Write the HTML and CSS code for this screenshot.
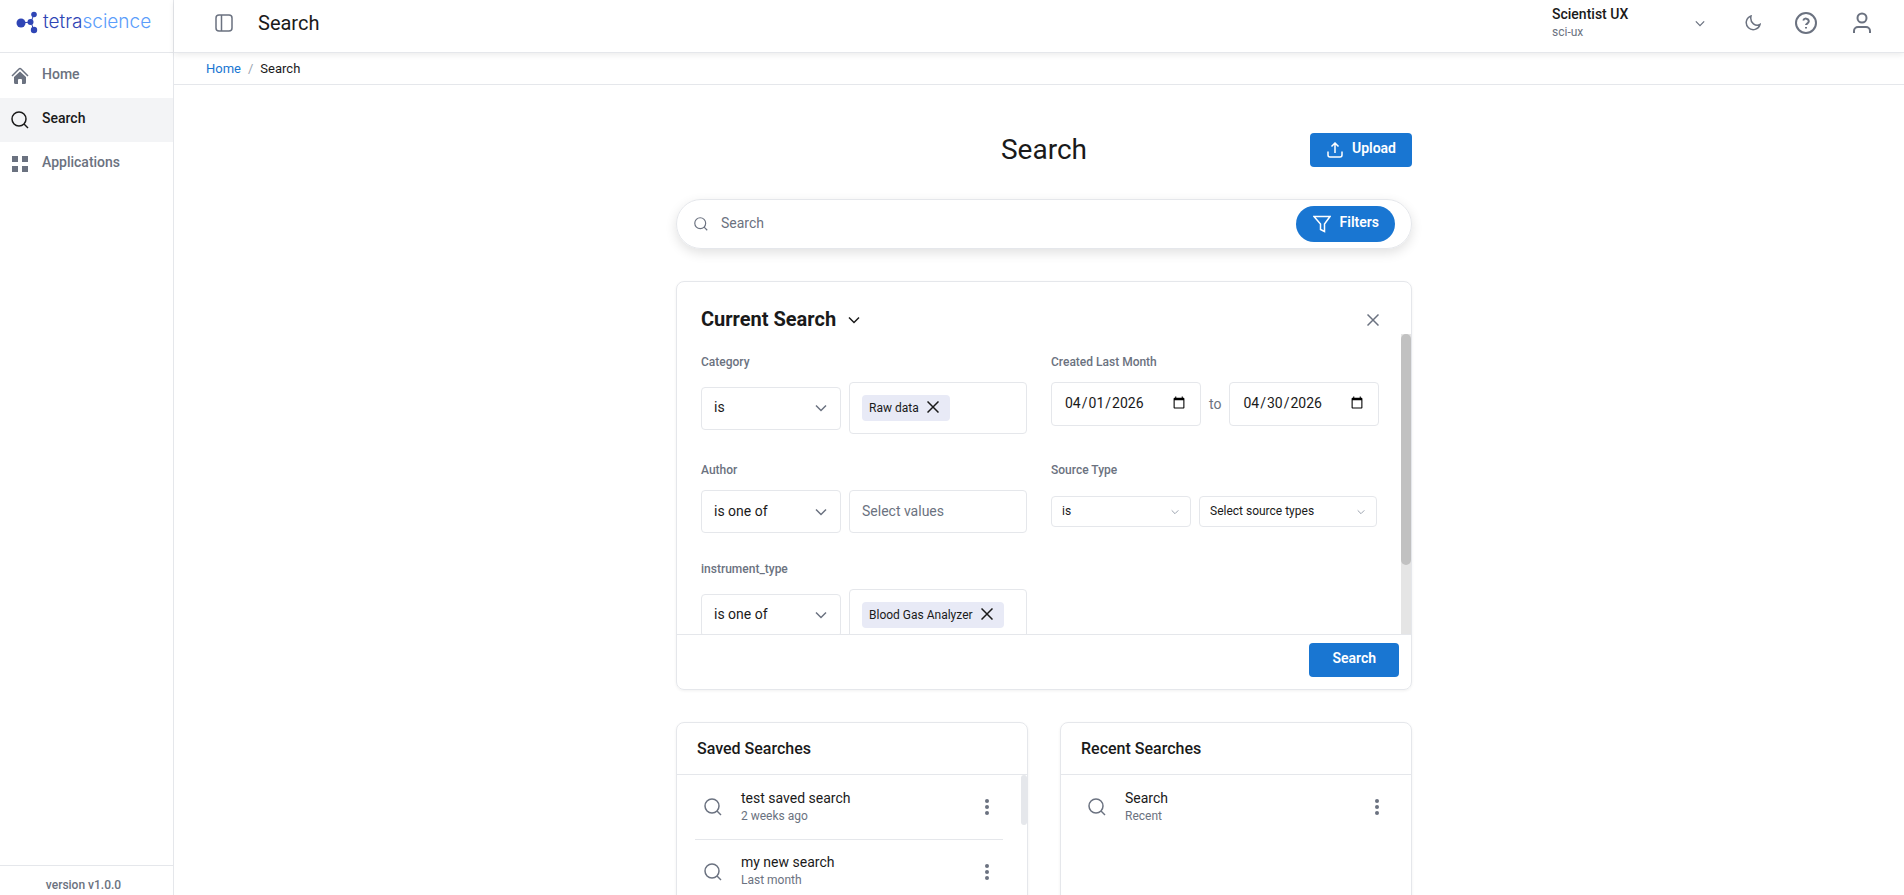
FILE: index.html
```
<!DOCTYPE html>
<html lang="en">
<head>
	<title>Search | TetraScience</title>
	<meta charset="utf-8">
	<meta name="viewport" content="width=device-width, initial-scale=1">
	<link rel="stylesheet" href="styles.css">
</head>

<body>

<!-- shared icons -->
<svg class="sprite" aria-hidden="true">
	<symbol id="i-search" viewBox="0 0 18 18"><circle cx="8" cy="8" r="7"/><path d="M13 13l4 4"/></symbol>
	<symbol id="i-chevron" viewBox="0 0 12 8"><path d="M1 1.5l5 5 5-5"/></symbol>
	<symbol id="i-close" viewBox="0 0 12 12"><path d="M.5.5l11 11M11.5.5l-11 11"/></symbol>
	<symbol id="i-dots" viewBox="0 0 4 16"><circle cx="2" cy="2" r="2"/><circle cx="2" cy="8" r="2"/><circle cx="2" cy="14" r="2"/></symbol>
</svg>

<div class="app">

	<aside class="sidebar">
		<a class="logo" href="#">
			<svg width="22" height="24" viewBox="0 0 22 24" aria-hidden="true">
				<path d="M5 13l10-1 3-8M15 12l3 9" fill="none" stroke="#2f45b5" stroke-width="1"/>
				<g fill="#2f45b5" stroke="none"><circle cx="5" cy="13" r="4.5"/><circle cx="14.5" cy="12" r="3"/><circle cx="18" cy="4.500" r="2.800"/><circle cx="18" cy="20" r="3.200"/></g>
			</svg>
			<span class="logo-text">tetra<span>science</span></span>
		</a>
		<nav class="nav">
			<a href="#">
				<svg width="18" height="18" viewBox="0 0 18 18"><path class="line" d="M1 9l7-7q1-1 2 0l7 7"/><path class="fill" d="M9 4.500l6 5.500v5.500q0 1.500-1.500 1.500H11v-4q0-1-1-1H8q-1 0-1 1v4H4.500Q3 17 3 15.500V10z"/></svg>
				<span>Home</span>
			</a>
			<a class="active" href="#">
				<svg width="18" height="18"><use href="#i-search"/></svg>
				<span>Search</span>
			</a>
			<a href="#">
				<svg width="18" height="18" viewBox="0 0 18 18"><path class="fill" d="M1 1h6v6H1zM11 1h6v6h-6zM1 11h6v6H1zM11 11h6v6h-6z"/></svg>
				<span>Applications</span>
			</a>
		</nav>
		<div class="version">version v1.0.0</div>
	</aside>

	<div class="page">

		<header class="topbar">
			<button class="icon-btn" title="Toggle sidebar">
				<svg width="18" height="18" viewBox="0 0 18 18"><rect x="1" y="1" width="16" height="16" rx="3"/><path d="M6.500 1v16"/></svg>
			</button>
			<div class="topbar-title">Search</div>
			<button class="org">
				<span class="org-name"><strong>Scientist UX</strong><small>sci-ux</small></span>
				<svg width="10" height="7"><use href="#i-chevron"/></svg>
			</button>
			<div class="tools">
				<button class="icon-btn" title="Dark mode">
					<svg width="16" height="16" viewBox="0 0 16 16"><path d="M6 1A7 7 0 1 0 15 9.500C11 12 4.500 8 6 1z"/></svg>
				</button>
				<button class="icon-btn" title="Help">
					<svg class="thick" width="22" height="22" viewBox="0 0 22 22"><circle cx="11" cy="11" r="10"/><path d="M8.200 8.500a2.900 2.900 0 0 1 5.600.8c0 2-2.800 2.400-2.800 3.700M11 15v1.500"/></svg>
				</button>
				<button class="icon-btn" title="Account">
					<svg class="thick" width="22" height="22" viewBox="0 0 22 22"><circle cx="11" cy="6" r="4.500"/><path d="M3 21v-2a4 4 0 0 1 4-4h8a4 4 0 0 1 4 4v2"/></svg>
				</button>
			</div>
		</header>

		<nav class="breadcrumb"><a href="#">Home</a><i>/</i><span>Search</span></nav>

		<main class="content">

			<div class="heading">
				<h1>Search</h1>
				<button class="btn">
					<svg width="16" height="16" viewBox="0 0 16 16"><path d="M8 11V1.500M4.500 4.500L8 1l3.500 3.500M1 9.500V13q0 2 2 2h10q2 0 2-2V9.500"/></svg>
					<span>Upload</span>
				</button>
			</div>

			<form class="search-bar">
				<svg width="14" height="14"><use href="#i-search"/></svg>
				<input type="search" placeholder="Search" aria-label="Search">
				<button class="btn round" type="button">
					<svg width="18" height="18" viewBox="0 0 18 18"><path d="M1 1.500h16l-5.500 7.500v7.500L7.500 14.500V9z"/></svg>
					<span>Filters</span>
				</button>
			</form>

			<section class="panel">
				<div class="panel-head">
					<h2>Current Search</h2>
					<svg width="12" height="8"><use href="#i-chevron"/></svg>
					<button class="icon-btn" title="Close"><svg width="12" height="12"><use href="#i-close"/></svg></button>
				</div>

				<div class="panel-body">
					<div class="filters">
						<div class="field">
							<label for="category-op">Category</label>
							<div class="row">
								<span class="select">
									<select id="category-op"><option>is</option></select>
									<svg width="12" height="8"><use href="#i-chevron"/></svg>
								</span>
								<div class="values tags">
									<span class="tag">Raw data<button title="Remove Raw data"><svg width="12" height="12"><use href="#i-close"/></svg></button></span>
								</div>
							</div>
						</div>

						<div class="field">
							<label for="created-from">Created Last Month</label>
							<div class="row dates">
								<input type="date" id="created-from" value="2026-04-01">
								<span>to</span>
								<input type="date" aria-label="Created to" value="2026-04-30">
							</div>
						</div>

						<div class="field">
							<label for="author-op">Author</label>
							<div class="row">
								<span class="select">
									<select id="author-op"><option>is one of</option></select>
									<svg width="12" height="8"><use href="#i-chevron"/></svg>
								</span>
								<input class="values" type="text" placeholder="Select values" aria-label="Author values">
							</div>
						</div>

						<div class="field">
							<label for="source-op">Source Type</label>
							<div class="row">
								<span class="select small">
									<select id="source-op"><option>is</option></select>
									<svg width="8" height="6"><use href="#i-chevron"/></svg>
								</span>
								<span class="select small wide">
									<select aria-label="Source types"><option>Select source types</option></select>
									<svg width="8" height="6"><use href="#i-chevron"/></svg>
								</span>
							</div>
						</div>

						<div class="field">
							<label for="instrument-op">instrument_type</label>
							<div class="row">
								<span class="select">
									<select id="instrument-op"><option>is one of</option></select>
									<svg width="12" height="8"><use href="#i-chevron"/></svg>
								</span>
								<div class="values tags">
									<span class="tag">Blood Gas Analyzer<button title="Remove Blood Gas Analyzer"><svg width="12" height="12"><use href="#i-close"/></svg></button></span>
								</div>
							</div>
						</div>
					</div>
					<div class="scrollbar"><div class="thumb"></div></div>
				</div>

				<div class="panel-foot">
					<button class="btn plain"><span>Search</span></button>
				</div>
			</section>

			<div class="cards">
				<section class="card">
					<h3>Saved Searches</h3>
					<div class="card-body">
						<ul>
							<li>
								<svg width="18" height="18"><use href="#i-search"/></svg>
								<a href="#">test saved search<small>2 weeks ago</small></a>
								<button class="icon-btn" title="More"><svg class="dots" width="4" height="16"><use href="#i-dots"/></svg></button>
							</li>
							<li>
								<svg width="18" height="18"><use href="#i-search"/></svg>
								<a href="#">my new search<small>Last month</small></a>
								<button class="icon-btn" title="More"><svg class="dots" width="4" height="16"><use href="#i-dots"/></svg></button>
							</li>
						</ul>
						<div class="scrollbar thin"><div class="thumb"></div></div>
					</div>
				</section>

				<section class="card">
					<h3>Recent Searches</h3>
					<div class="card-body">
						<ul>
							<li>
								<svg width="18" height="18"><use href="#i-search"/></svg>
								<a href="#">Search<small>Recent</small></a>
								<button class="icon-btn" title="More"><svg class="dots" width="4" height="16"><use href="#i-dots"/></svg></button>
							</li>
						</ul>
					</div>
				</section>
			</div>

		</main>
	</div>
</div>

</body>
</html>
```
FILE: styles.css
```
* {
	box-sizing: border-box;
}
body {
	margin: 0;
	color: #1a1a1a;
	background: #fff;
	font: 14px/20px Roboto, "Liberation Sans", sans-serif;
}
h1, h2, h3, ul {
	margin: 0;
	padding: 0;
	list-style: none;
}
a {
	color: inherit;
	text-decoration: none;
}
button, input, select {
	margin: 0;
	padding: 0;
	border: 0;
	color: inherit;
	background: none;
	font: inherit;
}
button {
	cursor: pointer;
}
svg {
	flex: none;
	fill: none;
	stroke: currentColor;
	stroke-width: 1.5;
}
.sprite {
	position: absolute;
	width: 0;
	height: 0;
}
.thick {
	stroke-width: 2;
}
.dots {
	fill: currentColor;
	stroke: none;
}
.icon-btn {
	display: flex;
	color: #6b7280;
}
.app {
	display: flex;
	height: 100vh;
	overflow: hidden;
}

/* sidebar */
.sidebar {
	display: flex;
	flex-direction: column;
	flex: none;
	width: 174px;
	border-right: 1px solid #e5e7eb;
}
.logo {
	display: flex;
	align-items: center;
	gap: 5px;
	height: 53px;
	padding: 0 0 9px 16px;
	border-bottom: 1px solid #e5e7eb;
}
.logo-text {
	color: #2f45b5;
	font: 300 19px/24px Inter, sans-serif;
}
.logo-text span {
	color: #5b9dfb;
}
.nav {
	flex: 1;
	padding-top: 1px;
}
.nav a {
	display: flex;
	align-items: center;
	gap: 13px;
	height: 44px;
	padding-left: 11px;
	color: #6b7280;
	font-weight: 500;
}
.nav a.active {
	color: #1a1a1a;
	background: #f3f4f6;
}
.nav span, .btn span {
	padding-bottom: 4px;
}
.nav .fill {
	fill: currentColor;
	stroke: none;
}
.version {
	height: 30px;
	padding: 9px 6px 0 0;
	border-top: 1px solid #e5e7eb;
	color: #6b7280;
	font-size: 12px;
	font-weight: 500;
	text-align: center;
}

/* top bar */
.page {
	flex: 1;
	min-width: 0;
}
.topbar {
	display: flex;
	align-items: center;
	height: 53px;
	padding: 0 31px 6px 41px;
	border-bottom: 1px solid #e5e7eb;
	box-shadow: 0 2px 6px rgba(0, 0, 0, 0.08);
}
.topbar-title {
	flex: 1;
	margin-left: 25px;
	font-size: 20px;
	line-height: 28px;
}
.org {
	display: flex;
	align-items: center;
	justify-content: space-between;
	width: 153px;
	color: #6b7280;
	text-align: left;
}
.org-name {
	padding-bottom: 3px;
}
.org strong, .org small {
	display: block;
	font-weight: 500;
	line-height: 20px;
}
.org strong {
	color: #1a1a1a;
}
.org small {
	font-size: 12px;
	font-weight: 400;
	line-height: 16px;
}
.tools {
	display: flex;
	align-items: center;
	gap: 34px;
	margin-left: 40px;
}
.breadcrumb {
	display: flex;
	gap: 7px;
	height: 32px;
	padding: 6px 32px;
	border-bottom: 1px solid #e5e7eb;
	font-size: 13px;
}
.breadcrumb a {
	color: #1976d2;
}
.breadcrumb i {
	color: #9ca3af;
	font-style: normal;
}

/* content */
.content {
	max-width: 746px;
	margin: 0 auto;
	padding: 48px 0 0 10px;
}
.heading {
	display: grid;
	grid-template-columns: 1fr auto 1fr;
	align-items: center;
	height: 34px;
}
.heading h1 {
	grid-column: 2;
	font-size: 28px;
	font-weight: 400;
	line-height: 34px;
}
.heading .btn {
	justify-self: end;
}
.btn {
	display: flex;
	align-items: center;
	gap: 9px;
	height: 34px;
	padding: 0 16px 0 17px;
	border-radius: 4px;
	color: #fff;
	background: #1976d2;
	font-weight: 600;
}
.btn.round {
	height: 36px;
	border-radius: 18px;
}
.btn.plain {
	padding: 0 23px;
}
.search-bar {
	display: flex;
	align-items: center;
	height: 50px;
	margin: 32px 0;
	padding: 0 16px 0 17px;
	border: 1px solid #e5e7eb;
	border-radius: 25px;
	color: #6b7280;
	box-shadow: 0 4px 12px rgba(0, 0, 0, 0.12);
}
.search-bar input {
	flex: 1;
	height: 36px;
	margin-left: 13px;
	padding-bottom: 2px;
	outline: 0;
}
::placeholder {
	color: #6b7280;
	opacity: 1;
}

/* drawn scrollbars */
.scrollbar {
	flex: none;
	width: 10px;
	background: #e5e5e5;
}
.thumb {
	height: 77%;
	border-radius: 5px;
	background: #c1c1c1;
}
.scrollbar.thin {
	width: 6px;
	background: none;
}
.thin .thumb {
	height: 50px;
	border-radius: 3px;
	background: #e5e7eb;
}

/* current search */
.panel, .card {
	border: 1px solid #e5e7eb;
	border-radius: 8px;
	box-shadow: 0 1px 3px rgba(0, 0, 0, 0.06);
}
.panel-head {
	display: flex;
	align-items: center;
	height: 52px;
	padding: 24px 32px 0 24px;
}
.panel-head h2 {
	margin-right: 12px;
	padding-bottom: 2px;
	font-size: 20px;
	font-weight: 700;
	line-height: 28px;
}
.panel-head .icon-btn {
	margin-left: auto;
}
.panel-body {
	display: flex;
	height: 300px;
	overflow: hidden;
}
.filters {
	display: grid;
	flex: 1;
	grid-template-columns: repeat(2, minmax(0, 1fr));
	align-content: start;
	gap: 27px 24px;
	padding: 19px 24px 0;
}
.field label {
	display: block;
	margin-bottom: 11px;
	color: #6b7280;
	font-size: 12px;
	font-weight: 500;
	line-height: 18px;
}
.row {
	display: flex;
	align-items: center;
	gap: 8px;
	min-height: 43px;
}
.select {
	display: grid;
	flex: none;
	align-items: center;
	width: 140px;
	color: #6b7280;
}
.select select, .select svg {
	grid-area: 1 / 1;
}
.select svg {
	justify-self: end;
	margin-right: 14px;
	pointer-events: none;
}
.select select, .values, .dates input {
	height: 43px;
	padding: 0 12px 2px;
	border: 1px solid #e5e7eb;
	border-radius: 4px;
	background: #fff;
}
.select select {
	width: 100%;
	color: #1a1a1a;
	appearance: none;
}
.select.small select {
	height: 31px;
	padding: 0 10px 2px;
	font-size: 12px;
}
.select.small svg {
	margin-right: 12px;
	color: #9ca3af;
}
.select.wide, .values {
	flex: 1;
	min-width: 0;
}
.values.tags {
	display: flex;
	align-items: center;
	height: 52px;
	padding: 0 12px;
}
.tag {
	display: flex;
	align-items: center;
	gap: 8px;
	height: 26px;
	padding: 0 11px 0 7px;
	border-radius: 4px;
	background: #e8eaf6;
	font-size: 12px;
}
.tag button {
	display: flex;
	padding-bottom: 2px;
}
.dates span {
	color: #6b7280;
}
.dates input {
	flex: none;
	width: 150px;
	height: 44px;
}
.panel-foot {
	display: flex;
	justify-content: flex-end;
	padding: 8px 12px 12px;
	border-top: 1px solid #e5e7eb;
}

/* saved and recent searches */
.cards {
	display: grid;
	grid-template-columns: 1fr 1fr;
	gap: 32px;
	margin-top: 32px;
}
.card h3 {
	height: 52px;
	padding: 14px 20px;
	border-bottom: 1px solid #e5e7eb;
	font-size: 16px;
	font-weight: 500;
	line-height: 24px;
}
.card-body {
	display: flex;
	height: 300px;
}
.card-body ul {
	flex: 1;
	padding: 0 18px;
}
.card li {
	display: flex;
	align-items: center;
	height: 64px;
	padding: 0 14px 0 9px;
	color: #6b7280;
}
.card li + li {
	border-top: 1px solid #e5e7eb;
}
.card li a {
	flex: 1;
	margin-left: 19px;
	padding-bottom: 3px;
	color: #1a1a1a;
}
.card li small {
	display: block;
	color: #6b7280;
	font-size: 12px;
	line-height: 16px;
}
```
